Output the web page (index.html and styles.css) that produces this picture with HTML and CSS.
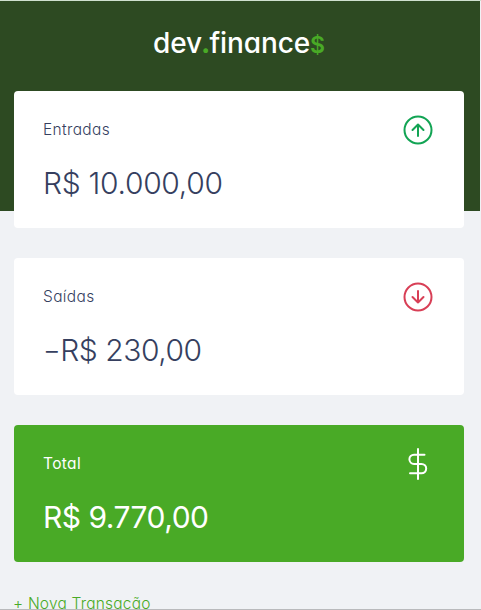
FILE: index.html
```html
<!DOCTYPE html>
<html lang="pt-br">
<head>
<meta charset="utf-8">
<title>dev.finance$</title>
<link rel="stylesheet" href="styles.css">
</head>
<body>
<header class="header">
  <h1 class="logo"><span class="dev">dev</span><span class="dot">.</span><span class="finance">finance</span><span class="sign">$</span></h1>
</header>
<main class="container">
  <section class="balance">
    <article class="card">
      <h3 class="label"><span>Entradas</span>
        <svg class="icon income" viewBox="0 0 32 32"><circle cx="16" cy="16" r="13.5"/><path d="M16 22V10.5M10.5 16L16 10.5L21.5 16"/></svg>
      </h3>
      <p class="amount in">R$ 10.000,00</p>
    </article>
    <article class="card">
      <h3 class="label"><span>Saídas</span>
        <svg class="icon expense" viewBox="0 0 32 32"><circle cx="16" cy="16" r="13.5"/><path d="M16 10V21.5M10.5 16L16 21.5L21.5 16"/></svg>
      </h3>
      <p class="amount out"><span class="minus">-</span>R$ 230,00</p>
    </article>
    <article class="card total">
      <h3 class="label"><span>Total</span>
        <svg class="icon" viewBox="0 0 32 32"><path d="M16 1V31M22.5 6.7H12A4.6 4.6 0 0 0 12 15.9H19.5A4.7 4.7 0 0 1 19.5 25.3H8"/></svg>
      </h3>
      <p class="amount sum">R$ 9.770,00</p>
    </article>
  </section>
  <a class="new">+ Nova Transação</a>
</main>
</body>
</html>
```
FILE: styles.css
```css
* { box-sizing: border-box; margin: 0; padding: 0; }
html { height: 610px; overflow: hidden; }
body {
  height: 610px;
  overflow: hidden;
  background: #f0f2f5;
  border-top: 1px solid #cfe0cf;
  border-bottom: 1px solid #b9babc;
  font-family: Inter, "Open Sans", sans-serif;
  font-feature-settings: "cv11" 1;
  color: #363f5f;
}
.header {
  width: 480px;
  height: 210px;
  padding-top: 22px;
  background: #2d4a22;
}
.logo {
  display: flex;
  justify-content: center;
  align-items: baseline;
  height: 40px;
  margin-right: 2px;
  line-height: 40px;
  font-size: 28px;
  font-weight: 500;
  letter-spacing: -0.1px;
  color: #fff;
}
.dot, .sign { color: #49aa26; }
.dot { font-weight: 700; margin: 0 -1px; }
.sign { font-size: 23px; font-weight: 600; }
.container { width: 450px; margin: -120px 0 0 14px; }
.balance { display: grid; gap: 30px; }
.card {
  height: 137px;
  padding: 23px 30px 23px 29px;
  border-radius: 4px;
  background: #fff;
}
.label {
  display: flex;
  align-items: center;
  justify-content: space-between;
  height: 32px;
  font-size: 15.5px;
  font-weight: 330;
  letter-spacing: 0.35px;
}
.label span { margin-bottom: 1px; }
.icon {
  width: 32px;
  height: 32px;
  fill: none;
  stroke: #fff;
  stroke-width: 2;
  stroke-linecap: round;
  stroke-linejoin: round;
}
.income { stroke: #12a454; }
.expense { stroke: #d83f56; }
.amount {
  margin-top: 15px;
  line-height: 45px;
  font-size: 30px;
  font-weight: 350;
  white-space: nowrap;
}
.in { letter-spacing: -0.3px; }
.out { letter-spacing: -0.45px; }
.sum { letter-spacing: -0.5px; }
.minus {
  display: inline-block;
  margin-right: 4px;
  transform: scaleX(1.3);
  transform-origin: left center;
}
.total { background: #49aa26; color: #fff; }
.total .label, .total .amount { font-weight: 420; }
.new {
  display: block;
  margin: 30px 0 0 -1px;
  line-height: 24px;
  font-size: 15.5px;
  font-weight: 330;
  letter-spacing: 0.2px;
  color: #49aa26;
}
```
